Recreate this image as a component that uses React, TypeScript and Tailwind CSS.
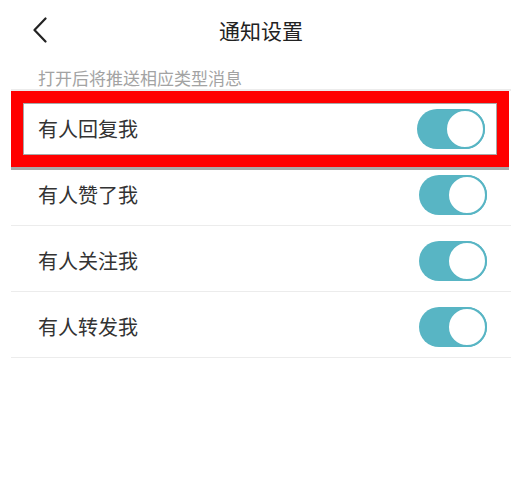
import { useState } from 'react';

const FONT = { fontFamily: '"Noto Sans CJK SC", "Noto Sans", sans-serif' };

function Toggle({ on, onClick }: { on: boolean; onClick: () => void }) {
  return (
    <button
      type="button"
      onClick={onClick}
      className={`relative w-[68px] h-[40px] rounded-full shrink-0 ${on ? 'bg-[#58b5c4]' : 'bg-[#d9d9d9]'}`}
    >
      <span
        className={`absolute top-0 w-[40px] h-[40px] rounded-full bg-white border-[2.5px] ${
          on ? 'right-0 border-[#58b5c4]' : 'left-0 border-[#d9d9d9]'
        }`}
      />
    </button>
  );
}

export default function App() {
  const [flags, setFlags] = useState({ reply: true, like: true, follow: true, share: true });
  const flip = (k: keyof typeof flags) => () => setFlags((f) => ({ ...f, [k]: !f[k] }));

  return (
    <div className="w-[525px] h-[490px] bg-white text-[#333]" style={FONT}>
      {/* Header */}
      <div className="relative h-[62px] flex items-center justify-center">
        <button className="absolute left-[30px] top-[16px] w-[20px] h-[28px] flex items-center justify-center">
          <svg width="16" height="26" viewBox="0 0 16 26" fill="none">
            <path d="M13.5 1.5 L2.5 13 L13.5 24.5" stroke="#222" strokeWidth="2.2" strokeLinecap="round" strokeLinejoin="round" />
          </svg>
        </button>
        <h1 className="text-[21px] leading-[26px] text-[#222] -mt-[2px] -ml-[3px]">通知设置</h1>
      </div>

      {/* Hint */}
      <div className="h-[27px] pl-[38px] pt-[5px] text-[17px] leading-[21px] text-[#a3a3a3]">
        打开后将推送相应类型消息
      </div>

      <div className="ml-[11px] mr-[14px]">
        <div className="h-[2px] bg-[#ececec]" />

        {/* Highlighted row */}
        <div className="border-[12px] border-[#ff0000] mr-[2px]">
          <div className="h-[52px] border border-[#a8a8a8] flex items-center justify-between pl-[14px] pr-[11px]">
            <span className="text-[20px]">有人回复我</span>
            <Toggle on={flags.reply} onClick={flip('reply')} />
          </div>
        </div>
        <div className="h-[3px] bg-[#a9a9a9] mr-[2px]" />

        <div className="h-[56px] flex items-center justify-between pl-[27px] pr-[24px] pb-[6px] border-b border-[#ececec]">
          <span className="text-[20px]">有人赞了我</span>
          <Toggle on={flags.like} onClick={flip('like')} />
        </div>
        <div className="h-[66px] flex items-center justify-between pl-[27px] pr-[24px] pt-[4px] border-b border-[#ececec]">
          <span className="text-[20px]">有人关注我</span>
          <Toggle on={flags.follow} onClick={flip('follow')} />
        </div>
        <div className="h-[66px] flex items-center justify-between pl-[27px] pr-[24px] pt-[4px] border-b border-[#ececec]">
          <span className="text-[20px]">有人转发我</span>
          <Toggle on={flags.share} onClick={flip('share')} />
        </div>
      </div>
    </div>
  );
}
